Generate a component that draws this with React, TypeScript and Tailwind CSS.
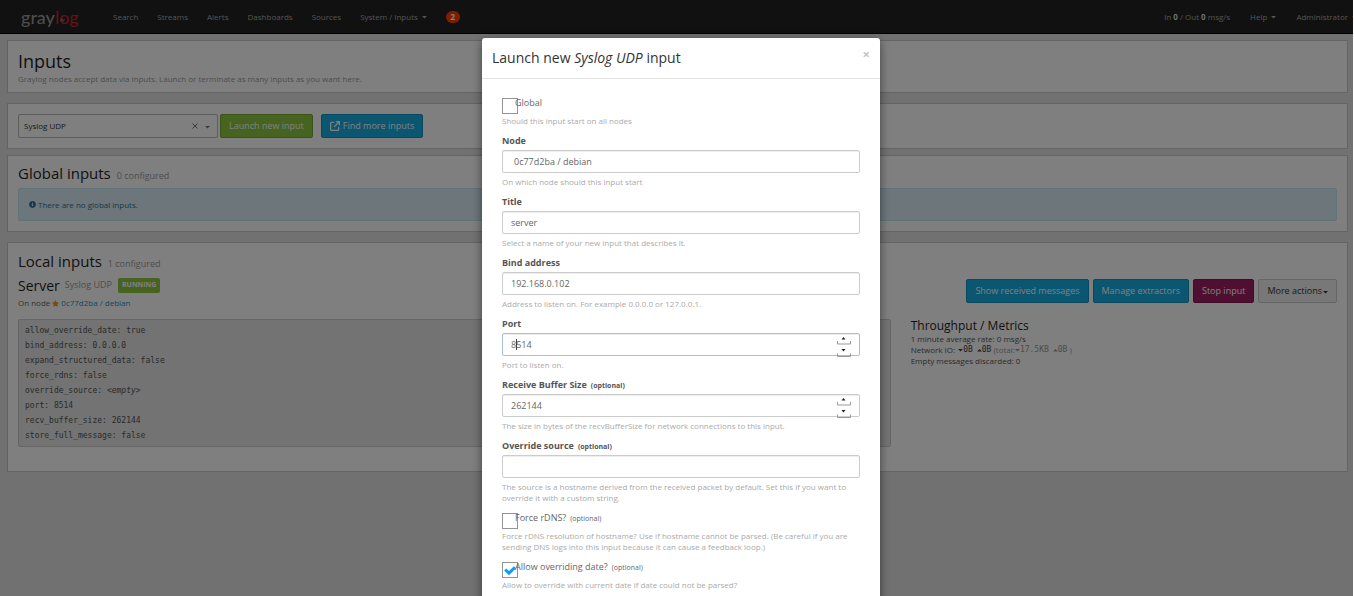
import React from "react";
import { FaInfoCircle, FaStar } from "react-icons/fa";
import { FaArrowUpRightFromSquare } from "react-icons/fa6";

function Caret({ up = false }: { up?: boolean }) {
  return (
    <svg width="5" height="5" viewBox="0 0 5 5" aria-hidden="true" className="inline-block shrink-0 align-middle">
      <path d={up ? "M0 4.500h5L2.500 2z" : "M0 2h5L2.500 4.500z"} fill="currentColor" />
    </svg>
  );
}

function Logo() {
  return (
    <a href="#home" aria-label="graylog" className="relative flex w-[92px] items-center pl-[21px] font-['Lato'] text-[18px] leading-5">
      <span className="font-medium text-[#9a9a9a]">gray</span>
      <span className="text-[#d0202c]">log</span>
      <svg width="5" height="4" viewBox="0 0 5 4" className="absolute top-[11px] left-[60px]" aria-hidden="true">
        <path d="M0 2.500h1.200L2 .5l1 3 .6-1.500H5" fill="none" stroke="#8a8a8a" strokeWidth="0.8" />
      </svg>
    </a>
  );
}

const navLinks = ["Search", "Streams", "Alerts", "Dashboards", "Sources"];

function Navbar() {
  return (
    <nav className="flex h-[34px] items-center overflow-hidden border-b border-black bg-[#222222] text-[8px] whitespace-nowrap text-[#a8a8a8]">
      <Logo />
      <ul className="ml-[21px] flex items-center gap-[19px]">
        {navLinks.map((name) => (
          <li key={name}>
            <a href={"#" + name.toLowerCase()}>{name}</a>
          </li>
        ))}
        <li>
          <button type="button" className="flex items-center gap-1">
            System / Inputs <Caret />
          </button>
        </li>
        <li>
          <a href="#notifications" className="flex h-3 w-[14px] items-center justify-center rounded-full bg-[#ff3b00] font-bold text-white">
            2
          </a>
        </li>
      </ul>
      <div className="-mr-1 ml-auto flex items-center gap-5">
        <span>
          In <b className="text-[#dddddd]">0</b> / Out <b className="text-[#dddddd]">0</b> msg/s
        </span>
        <button type="button" className="flex items-center gap-1">
          Help <Caret />
        </button>
        <button type="button" className="flex items-center gap-1">
          Administrator <Caret />
        </button>
      </div>
    </nav>
  );
}

function Panel({ className, children }: { className: string; children: React.ReactNode }) {
  return <section className={"border border-[#c9c9c9] bg-white px-[10px] " + className}>{children}</section>;
}

function SectionTitle({ title, note }: { title: string; note: string }) {
  return (
    <h2 className="h-5 text-[15px] leading-5 text-[#1f1f1f]">
      {title} <small className="ml-[2px] text-[9px] leading-none text-[#9a9a9a]">{note}</small>
    </h2>
  );
}

const buttonBase = "flex h-6 items-center rounded-[2px] border px-2 text-[9px] whitespace-nowrap ";

const settings: [string, React.ReactNode][] = [
  ["allow_override_date", "true"],
  ["bind_address", "0.0.0.0"],
  ["expand_structured_data", "false"],
  ["force_rdns", "false"],
  ["override_source", <i key="empty">&lt;empty&gt;</i>],
  ["port", "8514"],
  ["recv_buffer_size", "262144"],
  ["store_full_message", "false"],
];

function Page() {
  return (
    <main className="pt-[6px] pr-[5px] pl-[7px]">
      <Panel className="h-[53px] pt-2">
        <h1 className="text-[18px] leading-6 text-[#1f1f1f]">Inputs</h1>
        <p className="text-[8px] leading-3 text-[#9a9a9a]">
          Graylog nodes accept data via inputs. Launch or terminate as many inputs as you want here.
        </p>
      </Panel>

      <Panel className="mt-[10px] flex items-center py-[10px]">
        <div className="flex h-6 w-[200px] items-center justify-between rounded-[2px] border border-[#bbbbbb] pr-[7px] pl-[5px] text-[8px] text-[#333333]">
          <span>Syslog UDP</span>
          <span className="flex items-center gap-[7px] text-[#777777]">
            <button type="button" aria-label="Clear selection">
              <svg width="6" height="6" viewBox="0 0 6 6" aria-hidden="true">
                <path d="M.5.5l5 5M5.500.5l-5 5" stroke="currentColor" />
              </svg>
            </button>
            <Caret />
          </span>
        </div>
        <button type="button" className={buttonBase + "ml-[2px] border-[#76a72f] bg-[#8dc63f] text-white"}>
          Launch new input
        </button>
        <a href="#marketplace" className={buttonBase + "ml-2 border-[#1391bf] bg-[#16ace3] text-white"}>
          <FaArrowUpRightFromSquare className="mr-[3px] size-[10px]" />
          Find more inputs
        </a>
      </Panel>

      <Panel className="mt-[6px] pt-[7px] pb-[10px]">
        <SectionTitle title="Global inputs" note="0 configured" />
        <div className="mt-[5px] flex h-[33px] items-center rounded-[2px] border border-[#bce8f1] bg-[#d9edf7] px-[10px] text-[8px] text-[#31708f]">
          <FaInfoCircle className="mr-[2px] size-[7px]" />
          There are no global inputs.
        </div>
      </Panel>

      <Panel className="mt-[10px] pt-2 pb-6">
        <SectionTitle title="Local inputs" note="1 configured" />
        <div className="mt-[6px] flex justify-between">
          <div>
            <h2 className="flex h-4 items-center text-[14px] text-[#1f1f1f]">
              Server
              <small className="ml-[5px] text-[9px] text-[#9a9a9a]">Syslog UDP</small>
              <span className="ml-[6px] flex h-[15px] items-center rounded-[2px] bg-[#8dc63f] px-1 text-[7px] font-bold text-white">RUNNING</span>
            </h2>
            <p className="mt-1 flex items-center text-[8px] leading-3 text-[#666666]">
              On node <FaStar className="mx-[2px] size-[7px] text-[#f7941e]" />
              <a href="#node" className="text-[#1391bf]">
                0c77d2ba / debian
              </a>
            </p>
          </div>
          <div className="flex gap-1 pt-[2px]">
            <a href="#messages" className={buttonBase + "border-[#1391bf] bg-[#16ace3] text-white"}>
              Show received messages
            </a>
            <a href="#extractors" className={buttonBase + "border-[#1391bf] bg-[#16ace3] text-white"}>
              Manage extractors
            </a>
            <button type="button" className={buttonBase + "border-[#81194f] bg-[#9e1f63] text-white"}>
              Stop input
            </button>
            <button type="button" className={buttonBase + "gap-px border-[#cccccc] bg-[#f0f0f0] text-[#333333]"}>
              More actions <Caret />
            </button>
          </div>
        </div>
        <div className="mt-[10px] grid grid-cols-3 gap-5">
          <dl className="col-span-2 rounded-[2px] border border-[#cccccc] bg-[#e4e7e5] px-[6px] py-[3px] font-['DejaVu_Sans_Mono',monospace] text-[8px] leading-[15px] text-[#555555]">
            {settings.map(([key, value]) => (
              <div key={key} className="flex">
                <dt className="whitespace-pre">{key}: </dt>
                <dd>{value}</dd>
              </div>
            ))}
          </dl>
          <div className="text-[8px] leading-[11px] text-[#555555]">
            <h3 className="text-[12px] leading-[14px] text-[#1f1f1f]">Throughput / Metrics</h3>
            <p>1 minute average rate: 0 msg/s</p>
            <p className="flex items-center">
              <span className="mr-[3px]">Network IO:</span>
              <span className="flex items-center font-['DejaVu_Sans_Mono',monospace] text-[#444444]">
                <Caret />0B
                <span className="w-1" />
                <Caret up />0B
              </span>
              <span className="ml-[2px] flex items-center text-[#999999]">
                (total:
                <span className="flex items-center font-['DejaVu_Sans_Mono',monospace]">
                  <Caret />
                  17.5KB
                  <span className="w-1" />
                  <Caret up />0B
                </span>
                <span className="ml-[2px]">)</span>
              </span>
            </p>
            <p>Empty messages discarded: 0</p>
          </div>
        </div>
      </Panel>
    </main>
  );
}

const help = "text-[8px] leading-[11px] text-[#aaaaaa]";
const control =
  "block h-[23px] w-full appearance-none rounded-[2px] border bg-white text-[9px] text-[#666666] shadow-[inset_0_1px_1px_rgba(0,0,0,0.075)] outline-none ";

function Optional() {
  return <small className="ml-1 text-[7px] leading-none">(optional)</small>;
}

function Spinner() {
  return (
    <svg width="14" height="20" viewBox="0 0 14 20" aria-hidden="true" className="pointer-events-none absolute top-1 right-[9px]">
      <path d="M4.500 2.500h4L6.500 0zM4.500 12h4l-2 2.500z" fill="#222222" />
      <path d="M.5 4v3h13V4M.5 16.500v3h13v-3" fill="none" stroke="#999999" />
    </svg>
  );
}

type FieldProps = {
  id: string;
  label: string;
  hint: string;
  optional?: boolean;
  children: React.ReactNode;
};

function Field({ id, label, hint, optional, children }: FieldProps) {
  return (
    <div className="mb-2">
      <label htmlFor={id} className="mb-[3px] block h-[13px] text-[9px] leading-[13px] font-bold text-[#555555]">
        {label}
        {optional && <Optional />}
      </label>
      <div className="relative">{children}</div>
      <p className={"mt-[3px] " + help}>{hint}</p>
    </div>
  );
}

function CheckField({ id, label, hint, optional, checked }: Omit<FieldProps, "children"> & { checked?: boolean }) {
  return (
    <div className="mb-2">
      <div className="flex h-[19px]">
        <span className="relative mt-[2px] size-4">
          <input id={id} type="checkbox" defaultChecked={checked} className="block size-4 appearance-none border border-[#949494] bg-white" />
          {checked && (
            <svg width="12" height="11" viewBox="0 0 12 11" aria-hidden="true" className="pointer-events-none absolute top-[3px] left-[2px]">
              <path d="M1.200 4.500L5 8.200l6-6" fill="none" stroke="#0a9cff" strokeWidth="3" />
            </svg>
          )}
        </span>
        <label htmlFor={id} className="relative -ml-[3px] text-[9px] leading-[13px] text-[#666666]">
          {label}
          {optional && <Optional />}
        </label>
      </div>
      <p className={help}>{hint}</p>
    </div>
  );
}

function LaunchDialog() {
  return (
    <div role="dialog" aria-labelledby="dialog-title" className="w-[398px] rounded-[3px] bg-white shadow-[0_3px_10px_rgba(0,0,0,0.5)]">
      <header className="flex h-[41px] justify-between border-b border-[#e5e5e5] px-[10px] pt-[10px]">
        <h2 id="dialog-title" className="text-[14px] leading-5 text-[#333333]">
          Launch new <em>Syslog UDP</em> input
        </h2>
        <button type="button" aria-label="Close" className="h-3 text-[13px] leading-3 font-bold text-[#c4c4c4]">
          ×
        </button>
      </header>
      <form className="px-5 pt-[17px] pb-5">
        <CheckField id="global" label="Global" hint="Should this input start on all nodes" />
        <Field id="node" label="Node" hint="On which node should this input start">
          <select id="node" className={control + "border-[#cccccc] px-[11px]"}>
            <option>0c77d2ba / debian</option>
          </select>
        </Field>
        <Field id="title" label="Title" hint="Select a name of your new input that describes it.">
          <input id="title" defaultValue="server" className={control + "border-[#cccccc] px-2"} />
        </Field>
        <Field id="bind" label="Bind address" hint="Address to listen on. For example 0.0.0.0 or 127.0.0.1.">
          <input id="bind" defaultValue="192.168.0.102" className={control + "border-[#cccccc] px-2"} />
        </Field>
        <Field id="port" label="Port" hint="Port to listen on.">
          <input id="port" inputMode="numeric" defaultValue="8514" className={control + "border-[#a9bfd4] px-2"} />
          <span className="absolute top-[6px] left-[14px] h-[11px] w-px bg-[#444444]" aria-hidden="true" />
          <Spinner />
        </Field>
        <Field id="buffer" label="Receive Buffer Size" optional hint="The size in bytes of the recvBufferSize for network connections to this input.">
          <input id="buffer" inputMode="numeric" defaultValue="262144" className={control + "border-[#cccccc] px-2"} />
          <Spinner />
        </Field>
        <Field
          id="source"
          label="Override source"
          optional
          hint="The source is a hostname derived from the received packet by default. Set this if you want to override it with a custom string."
        >
          <input id="source" className={control + "border-[#cccccc] px-2"} />
        </Field>
        <CheckField
          id="rdns"
          label="Force rDNS?"
          optional
          hint="Force rDNS resolution of hostname? Use if hostname cannot be parsed. (Be careful if you are sending DNS logs into this input because it can cause a feedback loop.)"
        />
        <CheckField id="date" label="Allow overriding date?" optional checked hint="Allow to override with current date if date could not be parsed?" />
      </form>
    </div>
  );
}

export default function App() {
  return (
    <div className="relative h-screen overflow-hidden border-r border-white bg-[#e3e3e3] font-['Open_Sans',sans-serif]">
      <Navbar />
      <Page />
      <div className="absolute inset-0 flex items-start justify-center overflow-hidden bg-black/50 pt-[38px] pl-[9px]">
        <LaunchDialog />
      </div>
    </div>
  );
}
